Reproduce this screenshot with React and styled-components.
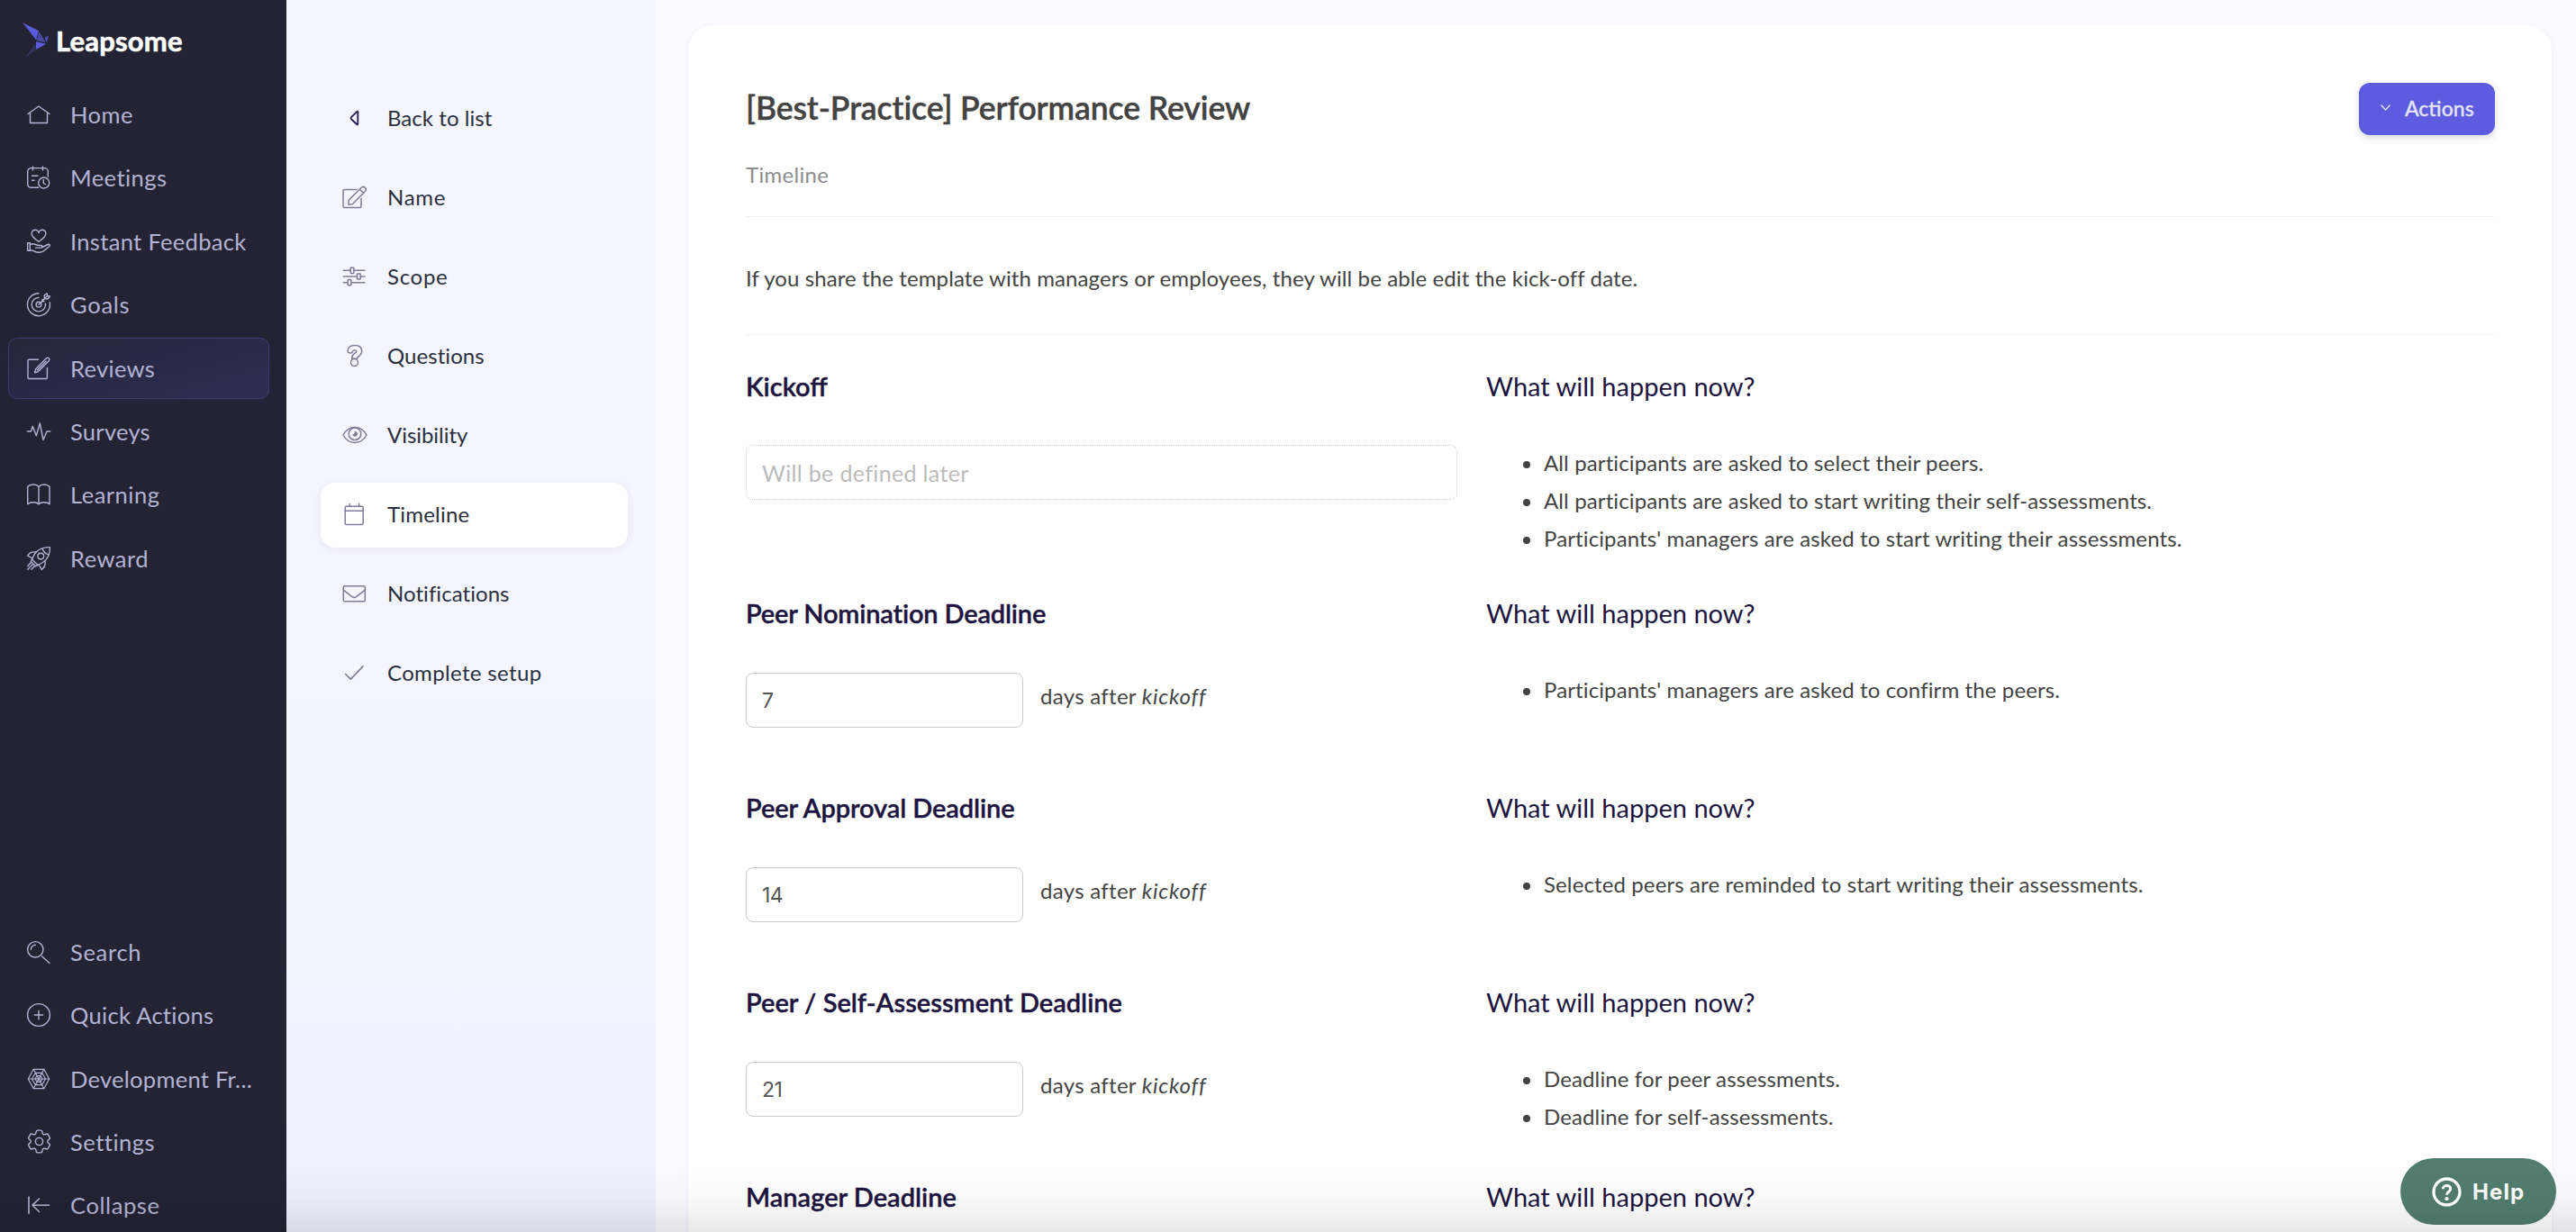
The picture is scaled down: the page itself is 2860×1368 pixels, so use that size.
import React from "react";
import styled, { createGlobalStyle } from "styled-components";
import { HiOutlineCog6Tooth } from "react-icons/hi2";

const GlobalStyle = createGlobalStyle`
    * {
        box-sizing: border-box;
    }
    body {
        margin: 0;
        background-color: #fbfaff;
        font-family: Lato, "Open Sans", sans-serif;
        overflow: hidden;
    }
    h1, h2, h3, p, ul {
        margin: 0;
        padding: 0;
    }
`;

const Layout = styled.div`
    display: flex;
    height: 100vh;
    overflow: hidden;
`;

const Sidebar = styled.nav`
    flex: 0 0 318px;
    background-color: #232334;
    overflow: hidden;
`;

const Logo = styled.div`
    display: flex;
    align-items: flex-start;
    height: 93px;
    padding: 25px 0 0 25px;
`;

const LogoText = styled.span`
    margin-left: 7px;
    font-size: 31px;
    font-weight: 700;
    line-height: 40px;
    letter-spacing: 0.2px;
    color: #ffffff;
    -webkit-text-stroke: 0.6px #ffffff;
`;

const MenuGroup = styled.div`
    display: flex;
    flex-direction: column;
    gap: 2.4px;
    margin: ${(props) => props.$top}px 19px 0 9px;
`;

const MenuItem = styled.a`
    display: flex;
    align-items: center;
    flex: 0 0 68px;
    padding-left: 20px;
    border: 1px solid ${(props) => (props.$active ? "#3e3b72" : "transparent")};
    border-radius: 10px;
    background: ${(props) => (props.$active ? "linear-gradient(165deg, #25273a 0%, #282a47 50%, #2f2f55 100%)" : "none")};
    box-shadow: ${(props) => (props.$active ? "0 4px 12px rgba(40, 50, 75, 0.35)" : "none")};
    color: #b3b3d3;
    font-size: 25.5px;
    white-space: nowrap;

    svg {
        flex: none;
        margin-right: 22px;
    }
`;

const Label = styled.span`
    letter-spacing: ${(props) => props.$track || 0}px;
`;

const SubNav = styled.nav`
    flex: 0 0 410px;
    display: flex;
    flex-direction: column;
    gap: 16px;
    padding: 96px 31px 0 38px;
    background: linear-gradient(180deg, #f5f5ff 55%, #f0f0fd 100%);
`;

const SubNavItem = styled.a`
    display: flex;
    align-items: center;
    flex: 0 0 72px;
    padding-left: 24px;
    border-radius: 16px;
    background-color: ${(props) => (props.$active ? "#ffffff" : "transparent")};
    box-shadow: ${(props) => (props.$active ? "0 2px 8px rgba(50, 40, 100, 0.07)" : "none")};
    color: ${(props) => (props.$dark ? "#2b2150" : "#807b99")};
    font-size: 24px;

    svg {
        flex: none;
        margin-right: 22px;
    }

    span {
        padding-bottom: 3px;
        color: #2a303d;
    }
`;

const Content = styled.main`
    flex: 1;
    padding: 28px 27px 0 36px;
`;

const Card = styled.div`
    height: 1500px;
    padding: 64px 64px 0 64px;
    border-radius: 28px;
    background-color: #ffffff;
    box-shadow: 0 2px 8px rgba(50, 40, 100, 0.05);
    color: #434343;
    font-size: 24px;
`;

const Header = styled.header`
    padding-bottom: 31px;
    border-bottom: 1px solid #f2f2f3;
`;

const TitleRow = styled.div`
    display: flex;
    justify-content: space-between;
    align-items: center;
    height: 58px;
`;

const Title = styled.h1`
    padding-bottom: 4px;
    font-size: 35.5px;
    font-weight: 600;
    letter-spacing: -0.1px;
    -webkit-text-stroke: 0.4px #434343;
`;

const ActionsButton = styled.button`
    display: flex;
    align-items: center;
    width: 151px;
    height: 58px;
    margin-right: -1px;
    padding: 0 0 2px 24px;
    border: none;
    border-radius: 12px;
    background-color: #5d5ce0;
    box-shadow: 0 3px 8px rgba(0, 0, 0, 0.14);
    color: #e5e4fb;
    font-family: inherit;
    font-size: 23px;
    font-weight: 500;
    -webkit-text-stroke: 0.3px #e5e4fb;

    svg {
        margin: 0 16px 2px 0;
    }
`;

const Subtitle = styled.p`
    margin-top: 29px;
    line-height: 30px;
    letter-spacing: 0.3px;
    color: #8c8c8c;
`;

const Intro = styled.p`
    padding: 53px 0 47px;
    border-bottom: 1px solid #f2f2f3;
    line-height: 30px;
    letter-spacing: 0.1px;
`;

const Sections = styled.div`
    padding-top: 39px;
`;

const Section = styled.section`
    display: grid;
    grid-template-columns: 790px 1fr;
    column-gap: 32px;
    height: ${(props) => props.$height}px;
`;

const Heading = styled.h2`
    color: #1d1540;
    font-size: 29px;
    font-weight: ${(props) => (props.$light ? 400 : 600)};
    line-height: 36px;
    letter-spacing: ${(props) => props.$track || 0}px;
    -webkit-text-stroke: ${(props) => (props.$light ? 0 : 0.4)}px #1d1540;
`;

const DateInput = styled.input`
    display: block;
    width: 100%;
    height: 61px;
    margin-top: 47px;
    padding: 0 17px;
    border: 1px dotted #cccccc;
    border-radius: 8px;
    background-color: #ffffff;
    font-family: inherit;
    font-size: 25px;
    letter-spacing: 0.35px;

    &::placeholder {
        color: #bbbbbb;
    }
`;

const OffsetRow = styled.div`
    display: flex;
    gap: 19px;
    margin-top: 48px;
`;

const DaysInput = styled.input`
    width: 308px;
    height: 61px;
    padding: 0 17px;
    border: 1px solid #cccccc;
    border-radius: 8px;
    background-color: #ffffff;
    color: #555555;
    font-family: Inter, sans-serif;
    font-size: 23px;
    letter-spacing: -0.6px;
`;

const Offset = styled.span`
    line-height: 52px;
    letter-spacing: 0.3px;

    em {
        letter-spacing: 0.8px;
    }
`;

const List = styled.ul`
    margin-top: 46px;
    padding-left: 41px;
    list-style: none;
`;

const ListItem = styled.li`
    display: flex;
    align-items: center;
    gap: 15px;
    line-height: 42px;
    letter-spacing: 0.12px;

    &::before {
        content: "";
        width: 8px;
        height: 8px;
        margin-top: 3px;
        border-radius: 50%;
        background-color: #434343;
    }
`;

const HelpButton = styled.button`
    position: fixed;
    right: 22px;
    bottom: 8px;
    display: flex;
    align-items: center;
    width: 173px;
    height: 74px;
    padding: 0 0 0 35px;
    border: none;
    border-radius: 37px;
    background-color: #527d6e;
    color: #ffffff;
    font-family: Inter, sans-serif;
    font-size: 24px;
    font-weight: 700;
    letter-spacing: 1.1px;

    svg {
        margin-right: 12px;
    }
`;

const BottomShade = styled.div`
    position: fixed;
    left: 0;
    right: 0;
    bottom: 0;
    height: 72px;
    background: linear-gradient(180deg, rgba(0, 0, 0, 0) 0%, rgba(0, 0, 0, 0.025) 50%, rgba(0, 0, 0, 0.09) 100%);
    pointer-events: none;
`;

const Icon = ({ size = 26, width = 1.4, children }) => (
    <svg
        width={size}
        height={size}
        viewBox={`0 0 ${size} ${size}`}
        fill="none"
        stroke="currentColor"
        strokeWidth={width}
        strokeLinecap="round"
        strokeLinejoin="round"
        overflow="visible"
    >
        {children}
    </svg>
);

const BirdLogo = () => (
    <svg width="30" height="40" viewBox="0 0 90 120">
        <polygon points="0,0 54,28 45,58" fill="#5b5bdd" />
        <polygon points="56,31 46,60 77,67" fill="#4646a3" />
        <polygon points="87,46 74,49 80,67" fill="#5050c4" />
        <polygon points="45,64 79,71 45,90" fill="#5b5bdd" />
        <polygon points="43,68 44,90 8,119" fill="#343463" />
    </svg>
);

const icons = {
    home: <Icon><path d="M1 12.500 13 4l12 8.500M3.500 12v10.500h19V12" /></Icon>,
    meetings: (
        <Icon>
            <path d="M12.500 24.300H4.500A4 4 0 0 1 .7 20.300V6.600a4 4 0 0 1 4-4h14.600a4 4 0 0 1 4 4v5.400M6.500 1v4M17.500 1v4M5.500 11.300H12M5.500 16.300H8" />
            <circle cx="18.700" cy="19" r="6" />
            <path d="M18.300 15.800v3.700l2 1.200" />
        </Icon>
    ),
    feedback: (
        <Icon>
            <path d="M13 13.400C9.500 10.500 5.200 8 5.200 4.700A3.900 3.900 0 0 1 13 3.600a3.900 3.900 0 0 1 7.800 1.100c0 3.300-4.300 5.800-7.800 8.700z" />
            <path d="M.6 14.800h2.700v8.500H.6zM3.300 16h4.500c2 0 3 1.500 5 1.500h2.600c2 0 2 2.600 0 2.600H9.500M17 19.500l6-3c1.800-.8 3.300.7 1.800 2L18 24c-2.500 1.700-7 1.700-9.500.2-1.500-.9-3-1.500-5.200-1.500" />
        </Icon>
    ),
    goals: (
        <Icon>
            <path d="M13 .7a12.500 12.500 0 1 0 12.200 10M13 5.500a7.700 7.700 0 1 0 7.500 6.500" />
            <circle cx="13" cy="13.200" r="2.900" />
            <path d="M13 13.200 20 6M19.500 6.500 19 3.200 22 .8l.6 2.700 2.900.5-2.600 3-3.400-.5zM22.600 3.500l-3.100 3M17 7.500l-.3 2.200 2.300-.2" />
        </Icon>
    ),
    reviews: (
        <Icon>
            <path d="M12.500 3.200H2.200A1.200 1.200 0 0 0 1 4.400v18.900a1.200 1.200 0 0 0 1.200 1.200h19a1.200 1.200 0 0 0 1.200-1.200V12.500" />
            <path d="m8.500 17.800 1.200-4L21.500 1.700c1.800-1.500 4.400.8 2.900 2.700L12.500 16.500zM11.500 14.800 21 5.200" />
        </Icon>
    ),
    surveys: <Icon><path d="M.4 13h3.900L6.300 7.500l4 10.200L14.300 4 18 22.500 22 13h3.600" /></Icon>,
    learning: (
        <Icon>
            <path d="M13 4.500C11.500 2.700 9.500 2 7 2S2.300 2.700.7 4.300v19.500C2.300 22.400 4.500 21.800 7 21.800s4.500.5 6 2c1.500-1.500 3.500-2 6-2s4.500.6 6 2V4.300C23.500 2.700 21.500 2 19 2s-4.500.7-6 2.500zM13 4.500v19.300" />
        </Icon>
    ),
    reward: (
        <Icon>
            <path d="M25.400.600C18 .300 12.500 2.500 8.500 8l-3 6 6.500 6.500 5.500-3C23.500 13.500 25.700 8 25.400.600zM17 2c1 3.500 3 5.500 7 7.200" />
            <circle cx="15.300" cy="10.600" r="3.400" />
            <path d="M10 6C5.500 5.300 2.800 6.500.600 10l5.400 2.800M20 16c.8 4.500-.5 7-3.700 9.400L13 20M5.500 14l-1.200 2.500 5.200 5.200 2.500-1.200M4.500 17.500.800 21.500M.8 25.300 6.500 19.500M4.800 25.300l3.500-3.500" />
        </Icon>
    ),
    search: (
        <Icon>
            <circle cx="9.300" cy="10.300" r="8.700" />
            <path d="M4.300 10.300a5 5 0 0 1 5-5M16.700 18l8.300 7.500" />
        </Icon>
    ),
    quick: (
        <Icon>
            <circle cx="13" cy="13" r="12.400" />
            <path d="M13 8.300v9.400M8.300 13h9.400" />
        </Icon>
    ),
    framework: (
        <Icon width={1.2}>
            <path d="M7.200 2.300h11.600L24.700 13l-5.900 10.700H7.200L1.300 13z" />
            <path d="M9.300 6.300h7.400L20.500 13l-3.800 6.700H9.300L5.500 13zM11 9.500h4l2 3.500-2 3.500h-4L9 13zM1.300 13h23.400M7.200 2.300l11.600 21.400M18.800 2.300 7.200 23.700" />
        </Icon>
    ),
    collapse: <Icon width={1.6}><path d="M2 4v18.500M24.500 13.200H6M13.500 6 6 13.200l7.500 7.300" /></Icon>,
    back: <Icon size={28} width={1.9}><path d="M17.300 6.500v13c0 .9-.6 1-1.200.5L10 14.200c-.7-.7-.7-1.400 0-2.100l6.100-6c.6-.6 1.200-.5 1.200.4z" /></Icon>,
    name: (
        <Icon size={28} width={1.5}>
            <path d="M16 4.500H2.300a1.300 1.300 0 0 0-1.300 1.300v17.400a1.300 1.300 0 0 0 1.300 1.300h17.400a1.300 1.300 0 0 0 1.300-1.300v-8.700" />
            <path d="M7 21.200v-4.700L21.300 2.300c2.600-2.400 6.700 1.200 4.300 4L11.500 20.500zM19.500 4.300l4.300 4.200" />
        </Icon>
    ),
    scope: (
        <Icon size={28} width={1.5}>
            <path d="M1.300 6.300h7.900M13 6.300h12M1.300 13h15.200M20.300 13H25M1.300 19.700h5M10 19.700h15" />
            <rect x="9.200" y="3.200" width="3.700" height="6.200" rx=".6" />
            <rect x="16.500" y="9.900" width="3.700" height="6.200" rx=".6" />
            <rect x="6.200" y="16.600" width="3.700" height="6.200" rx=".6" />
        </Icon>
    ),
    questions: (
        <Icon size={28} width={1.5}>
            <path d="M6 7.500C6.500 3.500 9.500 1.500 13.700 1.500c5 0 8 2.500 8 6.500 0 3.200-2 4.700-4 6-.9.600-1 1.200-1 2.200h-6c0-2.700.6-4.200 2.700-5.600 1.400-.9 2.300-1.400 2.300-2.400 0-2-4-2-4.200.3-.6 2.200-5.500 2-5.500-1z" />
            <circle cx="13.500" cy="20.600" r="4" />
        </Icon>
    ),
    visibility: (
        <Icon size={28} width={1.5}>
            <path d="M1 13C4 7.500 8.500 4.500 14 4.500S24 7.500 27 13c-3 5.500-7.500 8.500-13 8.500S4 18.500 1 13z" />
            <circle cx="14" cy="11.800" r="6.800" />
            <path d="M14.300 9.300a2.500 2.500 0 1 1-2.600 3.300c1.600.2 2.800-1.300 2.600-3.300z" fill="currentColor" strokeWidth="1" />
        </Icon>
    ),
    timeline: (
        <Icon size={28} width={1.5}>
            <rect x="3.200" y="4.300" width="20" height="20.200" rx="1.600" />
            <path d="M3.200 9.300h20M8.300 1.500v2.800M18.700 1.500v2.800" />
        </Icon>
    ),
    notifications: (
        <Icon size={28} width={1.5}>
            <rect x="1.300" y="4.800" width="24" height="17" rx="1.200" />
            <path d="m1.500 9.300 9.500 7.300c1.500 1.100 3 1.100 4.500 0L25 9.300" />
        </Icon>
    ),
    complete: <Icon size={28} width={1.7}><path d="m3.700 14.500 5.600 5.700L23 5.800" /></Icon>,
};

const SettingsIcon = styled.span`
    display: flex;
    margin: 0 18.500px 0 -3.500px;

    svg {
        margin: 0;
    }
`;

const mainMenu = [
    { name: "Home", icon: "home", track: 0.5 },
    { name: "Meetings", icon: "meetings", track: 0.43 },
    { name: "Instant Feedback", icon: "feedback", track: 0.33 },
    { name: "Goals", icon: "goals", track: 0.75 },
    { name: "Reviews", icon: "reviews", track: 0.32, active: true },
    { name: "Surveys", icon: "surveys", track: 0.28 },
    { name: "Learning", icon: "learning", track: 0.5 },
    { name: "Reward", icon: "reward", track: 0.5 },
];

const footerMenu = [
    { name: "Search", icon: "search", track: 0.7 },
    { name: "Quick Actions", icon: "quick", track: 0.3 },
    { name: "Development Fr...", icon: "framework", track: 0.28 },
    { name: "Settings", icon: "settings", track: 0.5 },
    { name: "Collapse", icon: "collapse", track: 0.6 },
];

const steps = [
    { name: "Back to list", icon: "back", track: 0.05, dark: true },
    { name: "Name", icon: "name", track: 0.7 },
    { name: "Scope", icon: "scope", track: 0.7 },
    { name: "Questions", icon: "questions", track: 0.05 },
    { name: "Visibility", icon: "visibility", track: -0.05 },
    { name: "Timeline", icon: "timeline", track: 0.2, active: true },
    { name: "Notifications", icon: "notifications", track: 0.05 },
    { name: "Complete setup", icon: "complete", track: 0.35 },
];

const deadlines = [
    {
        title: "Kickoff",
        height: 252,
        items: [
            "All participants are asked to select their peers.",
            "All participants are asked to start writing their self-assessments.",
            "Participants' managers are asked to start writing their assessments.",
        ],
    },
    { title: "Peer Nomination Deadline", height: 216, days: 7, track: -0.17, items: ["Participants' managers are asked to confirm the peers."] },
    { title: "Peer Approval Deadline", height: 216, days: 14, track: -0.1, items: ["Selected peers are reminded to start writing their assessments."] },
    { title: "Peer / Self-Assessment Deadline", height: 216, days: 21, items: ["Deadline for peer assessments.", "Deadline for self-assessments."] },
    { title: "Manager Deadline", height: 216, items: [], collapsed: true },
];

const Menu = ({ items, top }) => (
    <MenuGroup $top={top}>
        {items.map((item) => (
            <MenuItem key={item.name} $active={item.active}>
                {item.icon === "settings" ? (
                    <SettingsIcon><HiOutlineCog6Tooth size={33} strokeWidth={1.05} /></SettingsIcon>
                ) : (
                    icons[item.icon]
                )}
                <Label $track={item.track}>{item.name}</Label>
            </MenuItem>
        ))}
    </MenuGroup>
);

const DeadlineField = ({ days }) => {
    if (!days) {
        return <DateInput placeholder="Will be defined later" disabled />;
    }
    return (
        <OffsetRow>
            <DaysInput defaultValue={days} />
            <Offset>days after <em>kickoff</em></Offset>
        </OffsetRow>
    );
};

const App = () => {
    return (
        <>
            <GlobalStyle />
            <Layout>
                <Sidebar>
                    <Logo>
                        <BirdLogo />
                        <LogoText>Leapsome</LogoText>
                    </Logo>
                    <Menu items={mainMenu} top={0} />
                    <Menu items={footerMenu} top={369} />
                </Sidebar>
                <SubNav>
                    {steps.map((step) => (
                        <SubNavItem key={step.name} $active={step.active} $dark={step.dark}>
                            {icons[step.icon]}
                            <Label $track={step.track}>{step.name}</Label>
                        </SubNavItem>
                    ))}
                </SubNav>
                <Content>
                    <Card>
                        <Header>
                            <TitleRow>
                                <Title>[Best-Practice] Performance Review</Title>
                                <ActionsButton>
                                    <svg width="11" height="7" viewBox="0 0 11 7" fill="none" stroke="currentColor" strokeWidth="1.300">
                                        <path d="M.5.500 5.500 6l5-5.500" />
                                    </svg>
                                    Actions
                                </ActionsButton>
                            </TitleRow>
                            <Subtitle>Timeline</Subtitle>
                        </Header>
                        <Intro>If you share the template with managers or employees, they will be able edit the kick-off date.</Intro>
                        <Sections>
                            {deadlines.map((deadline) => (
                                <Section key={deadline.title} $height={deadline.height}>
                                    <div>
                                        <Heading $track={deadline.track}>{deadline.title}</Heading>
                                        {!deadline.collapsed && <DeadlineField days={deadline.days} />}
                                    </div>
                                    <div>
                                        <Heading $light>What will happen now?</Heading>
                                        <List>
                                            {deadline.items.map((text) => (
                                                <ListItem key={text}>{text}</ListItem>
                                            ))}
                                        </List>
                                    </div>
                                </Section>
                            ))}
                        </Sections>
                    </Card>
                </Content>
            </Layout>
            <HelpButton>
                <svg width="33" height="33" viewBox="0 0 33 33" fill="none" stroke="currentColor" strokeWidth="3.300">
                    <circle cx="16.500" cy="16.500" r="14.500" />
                    <path d="M12.300 13.300c.2-5 8.600-5 8.400 0 0 2.900-4.200 3-4.200 6.400" strokeWidth="3" />
                    <circle cx="16.500" cy="24.200" r="2.100" fill="currentColor" stroke="none" />
                </svg>
                Help
            </HelpButton>
            <BottomShade />
        </>
    );
};

export default App;
